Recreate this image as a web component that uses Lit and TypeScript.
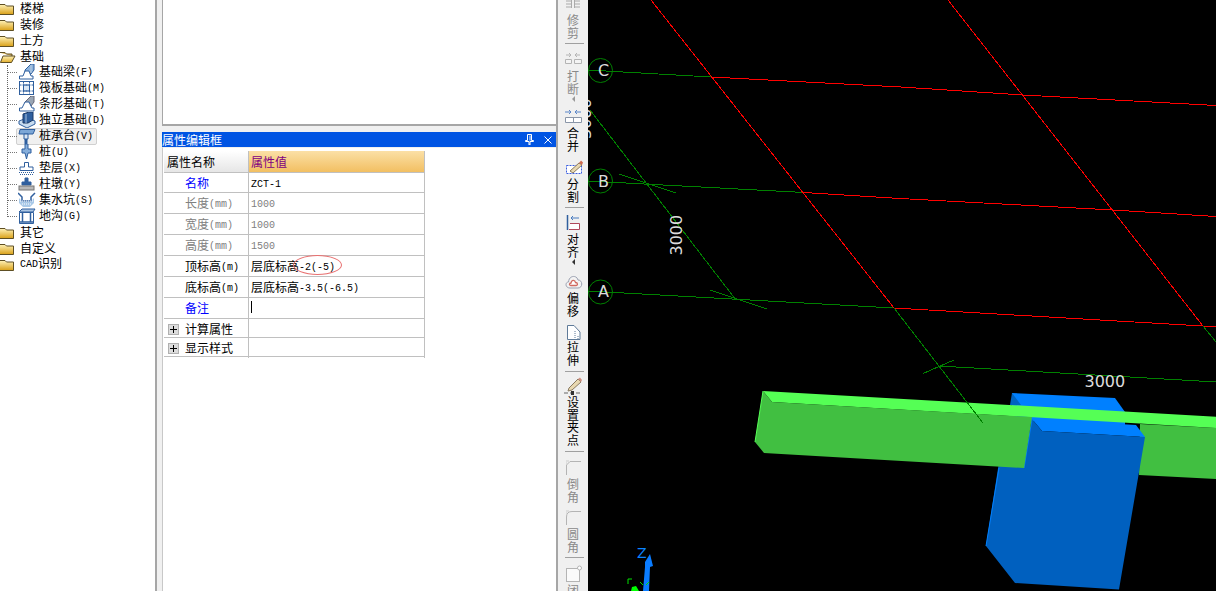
import { LitElement, css, html } from "lit";
import { customElement } from "lit/decorators.js";

// latin runs use a 6px wide mono, like the bitmap SimSun of the original
const mix = (text: string) =>
  text.split(/([\x00-\x7f]+)/).map((part, i) => (i % 2 ? html`<span class="lat">${part}</span>` : part));

const folderClosed = html`<svg width="14" height="13" viewBox="0 0 14 13">
  <defs><linearGradient id="fc" x1="0" y1="0" x2="0" y2="1"><stop offset="0" stop-color="#fff2b8"/><stop offset="1" stop-color="#d9a017"/></linearGradient></defs>
  <path d="M-1 2.5H5L6.5 4H13.5V12.5H-1Z" fill="url(#fc)" stroke="#5e4f24"/>
</svg>`;

const folderOpen = html`<svg width="16" height="13" viewBox="0 0 16 13">
  <defs><linearGradient id="fo" x1="0" y1="0" x2="0" y2="1"><stop offset="0" stop-color="#fff2b8"/><stop offset="1" stop-color="#e2ad2a"/></linearGradient></defs>
  <path d="M-1 2.5H5L6.5 4H12V6" fill="#d9b45a" stroke="#5e4f24"/>
  <path d="M3 6H15L11.5 12.5H0.5Z" fill="url(#fo)" stroke="#5e4f24"/>
</svg>`;

const B = "#2f5f9e";

const treeIcons: Record<string, unknown> = {
  beam: html`<svg class="ti" width="18" height="16" viewBox="0 0 18 16"><path d="M7 6L13 0H16V6L13 10H7Z" fill="#8fb4dc" stroke="${B}"/><path d="M1.5 15V12H5L7 7H11L13 12H15V15Z" fill="#fff" stroke="${B}"/><path d="M13 1V9" stroke="#bcd" /></svg>`,
  raft: html`<svg class="ti" width="18" height="16" viewBox="0 0 18 16"><rect x="1.5" y="1.5" width="14" height="13" fill="#fff" stroke="${B}"/><rect x="5.5" y="5" width="6" height="6" fill="#dbe8f5" stroke="${B}"/><path d="M1.5 5H15.5M1.5 11H15.5M5.5 1.5V14.5M11.5 1.5V14.5" stroke="${B}" stroke-dasharray="2 1"/></svg>`,
  strip: html`<svg class="ti" width="18" height="16" viewBox="0 0 18 16"><path d="M7 6L13 0H16V6L13 10H7Z" fill="#9aa6b4" stroke="#667"/><path d="M1.5 15V12H4L7 6H11L14 12H16V15Z" fill="#fff" stroke="${B}"/></svg>`,
  single: html`<svg class="ti" width="18" height="16" viewBox="0 0 18 16"><path d="M1 9L9 6L17 9V12L9 16L1 12Z" fill="#c8dcef" stroke="${B}"/><path d="M5 2L11 0H15V8L10 11H5Z" fill="${B}" stroke="#1c3a66"/><path d="M8 2V11" stroke="#a9c4e2"/></svg>`,
  cap: html`<svg class="ti" width="18" height="16" viewBox="0 0 18 16"><path d="M2 1.5H17L15 6H1Z" fill="#7da7d6" stroke="${B}"/><path d="M6 6H10V11H6Z" fill="#dce8f4" stroke="${B}"/><path d="M8 11V16" stroke="${B}" stroke-width="3"/></svg>`,
  pile: html`<svg class="ti" width="18" height="16" viewBox="0 0 18 16"><path d="M7 0H10V5H13V9H10L8.5 15L7 9H4V5H7Z" fill="#86aedb" stroke="${B}"/></svg>`,
  cushion: html`<svg class="ti" width="18" height="16" viewBox="0 0 18 16"><path d="M6.5 2.5H10.5V7H15V10.5H2V7H6.5Z" fill="#fff" stroke="${B}"/><path d="M1 12.5H16M2 14.5H15" stroke="${B}" stroke-dasharray="1 1"/></svg>`,
  pier: html`<svg class="ti" width="18" height="16" viewBox="0 0 18 16"><path d="M7 2H10V6H13V9H4V6H7Z" fill="${B}" stroke="${B}"/><rect x="1" y="10" width="15" height="4" fill="#b8b8b8" stroke="#777"/></svg>`,
  sump: html`<svg class="ti" width="18" height="16" viewBox="0 0 18 16"><path d="M0 1L4 5V9H13V5L17 1" fill="none" stroke="${B}" stroke-width="1.5"/><path d="M1 6L4 9.5H13L16 6V11L12 15H5L1 11Z" fill="#a9c9e8"/><path d="M2 9H15M4 12H13" stroke="#fff" stroke-dasharray="1 1"/></svg>`,
  ditch: html`<svg class="ti" width="18" height="16" viewBox="0 0 18 16"><path d="M1 4L4 1H17L15 4Z" fill="#a9c4e2" stroke="${B}"/><path d="M1.5 4.5H15.5V15.5H1.5Z" fill="none" stroke="${B}"/><path d="M4.5 5V14.5M12.5 5V14.5M1.5 14H15.5" stroke="${B}" stroke-width="1.5"/></svg>`,
};

interface TreeRow {
  label: string;
  icon?: string;
  open?: boolean;
}

const TREE: TreeRow[] = [
  { label: "楼梯" },
  { label: "装修" },
  { label: "土方" },
  { label: "基础", open: true },
  { label: "基础梁(F)", icon: "beam" },
  { label: "筏板基础(M)", icon: "raft" },
  { label: "条形基础(T)", icon: "strip" },
  { label: "独立基础(D)", icon: "single" },
  { label: "桩承台(V)", icon: "cap" },
  { label: "桩(U)", icon: "pile" },
  { label: "垫层(X)", icon: "cushion" },
  { label: "柱墩(Y)", icon: "pier" },
  { label: "集水坑(S)", icon: "sump" },
  { label: "地沟(G)", icon: "ditch" },
  { label: "其它" },
  { label: "自定义" },
  { label: "CAD识别" },
];

interface PropRow {
  name: string;
  value?: string;
  tone?: string;
  plus?: boolean;
  cursor?: boolean;
  ring?: boolean;
  size?: string;
}

const PROPS: PropRow[] = [
  { name: "名称", value: "ZCT-1", tone: "link", size: "h20" },
  { name: "长度(mm)", value: "1000", tone: "muted" },
  { name: "宽度(mm)", value: "1000", tone: "muted" },
  { name: "高度(mm)", value: "1500", tone: "muted" },
  { name: "顶标高(m)", value: "层底标高-2(-5)", ring: true },
  { name: "底标高(m)", value: "层底标高-3.5(-6.5)" },
  { name: "备注", tone: "link", cursor: true },
  { name: "计算属性", plus: true, size: "h19" },
  { name: "显示样式", plus: true, size: "h19" },
];

const GR = "#b4b4b4";

interface Tool {
  chars: string;
  top: number;
  icon: unknown;
  off?: boolean;
  arrow?: boolean;
  sep?: number;
}

const TOOLS: Tool[] = [
  {
    chars: "修剪", top: -5, off: true, sep: 4,
    icon: html`<svg class="tbi" width="24" height="18" viewBox="0 0 24 18"><path d="M5 6H10M5 9H10M5 12H10M14 6H19M14 9H19M14 12H19M10.500 5V13M13.500 5V13" stroke="#aaa" fill="none"/></svg>`,
  },
  {
    chars: "打断", top: 7, off: true, arrow: true,
    icon: html`<svg class="tbi" width="24" height="18" viewBox="0 0 24 18"><path d="M5 4H10M8 2L10 4L8 6M19 4H14M16 2L14 4L16 6" stroke="${GR}" fill="none"/><path d="M4.500 8.500H10.500V12.500H4.500ZM13.500 8.500H20.500V12.500H13.500Z" stroke="${GR}" fill="#f4f4f4"/></svg>`,
  },
  {
    chars: "合并", top: 6,
    icon: html`<svg class="tbi" width="24" height="18" viewBox="0 0 24 18"><path d="M4 4H10M8 2L10 4L8 6M20 4H14M16 2L14 4L16 6" stroke="#5b86c8" fill="none"/><path d="M4.500 9.500H20.500V14.500H4.500ZM12.500 9.500V14.500" stroke="#8a96a8" fill="#fff"/></svg>`,
  },
  {
    chars: "分割", top: 7, sep: 4,
    icon: html`<svg class="tbi" width="24" height="18" viewBox="0 0 24 18"><rect x="5.500" y="6.500" width="15" height="8" fill="#fff" stroke="#3a5ee0" stroke-dasharray="2 1"/><path d="M9 12L18 4L21 6L12 14Z" fill="#e8d8b0" stroke="#8a7a60"/><path d="M18 4L20 1.500L22 3.500L21 6Z" fill="#d06a50"/></svg>`,
  },
  {
    chars: "对齐", top: 6, arrow: true,
    icon: html`<svg class="tbi" width="24" height="18" viewBox="0 0 24 18"><path d="M6.500 1V16" stroke="#2f5f9e" stroke-width="1.500" fill="none"/><path d="M10 4H18M12 2L10 4L12 6" stroke="#4a7cc0" fill="none"/><path d="M9 9.500H18.500V15.500H8" fill="#fff" stroke="#b0485a"/></svg>`,
  },
  {
    chars: "偏移", top: 8,
    icon: html`<svg class="tbi" width="24" height="18" viewBox="0 0 24 18"><path d="M9 15C4 15 4 9 7.500 9C8 2 16 2 17 7C22 7 22 15 17 15Z" fill="#f3f3f3" stroke="#9aa0b0"/><path d="M10 12.500C8 12.500 8 10 10 10C10.500 6.500 14 6.500 14.500 9.500C17 9.500 17 12.500 15 12.500Z" fill="#fff" stroke="#d06a60" stroke-width="1.300"/></svg>`,
  },
  {
    chars: "拉伸", top: 5, sep: 5,
    icon: html`<svg class="tbi" width="24" height="18" viewBox="0 0 24 18"><path d="M6.500 3.500H13L19 10V17.500H6.500Z" fill="#fff" stroke="#5f7a98"/><path d="M14 9V17M17 14V17" stroke="#5f7a98" stroke-dasharray="1 1"/></svg>`,
  },
  {
    chars: "设置夹点", top: 5, sep: 5,
    icon: html`<svg class="tbi" width="24" height="18" viewBox="0 0 24 18"><path d="M8 11L17 2L20 5L11 13L7 14Z" fill="#e8d8b0" stroke="#8a7a60"/><path d="M17 2L19 0.500L21 3L20 5Z" fill="#d09080"/><path d="M3 16H21" stroke="#666" stroke-dasharray="4 2"/><rect x="10" y="14" width="3" height="4" fill="#333"/></svg>`,
  },
  {
    chars: "倒角", top: 7, off: true,
    icon: html`<svg class="tbi" width="24" height="18" viewBox="0 0 24 18"><path d="M5.500 16V6L9 2.500H20" stroke="${GR}" fill="none"/><path d="M5 2H8M5 4H6" stroke="#ccc"/></svg>`,
  },
  {
    chars: "圆角", top: 6, off: true, sep: 4,
    icon: html`<svg class="tbi" width="24" height="18" viewBox="0 0 24 18"><path d="M5.500 16V8Q5.500 2.500 11 2.500H20" stroke="${GR}" fill="none"/><path d="M5 2H8M5 4H6" stroke="#ccc"/></svg>`,
  },
  {
    chars: "闭", top: 7, off: true,
    icon: html`<svg class="tbi" width="24" height="18" viewBox="0 0 24 18"><rect x="5.500" y="3.500" width="13" height="13" fill="#fafafa" stroke="${GR}"/><circle cx="18.500" cy="3" r="2" fill="#fff" stroke="${GR}"/></svg>`,
  },
];

@customElement("app-root")
export class AppRoot extends LitElement {
  static styles = css`
    :host {
      display: block;
      width: 1216px;
      height: 591px;
      overflow: hidden;
      font-family: "Noto Sans CJK SC", "Liberation Sans", sans-serif;
      font-size: 12px;
      color: #000;
      background: #fff;
    }

    .app {
      display: flex;
      height: 591px;
    }

    .lat {
      font-family: "Liberation Mono", monospace;
      font-size: 10px;
      vertical-align: 1px;
    }

    .tree {
      position: relative;
      width: 155px;
      flex: none;
      border-right: 2px solid #a6a6a6;
      overflow: hidden;
    }

    .tree-row {
      display: flex;
      align-items: center;
      height: 16px;
      line-height: 16px;
      white-space: nowrap;
    }

    .tree-row .name {
      margin-left: 6px;
    }

    .tree-row.open .name {
      margin-left: 4px;
    }

    .tree-row.child {
      margin-left: 8px;
      padding-left: 10px;
      background: repeating-linear-gradient(90deg, #777 0 1px, transparent 1px 2px) 0 8px / 10px 1px no-repeat;
    }

    .tree-row.child .name {
      margin-left: 3px;
    }

    .highlight {
      position: absolute;
      left: 16px;
      top: 128px;
      width: 79px;
      height: 15px;
      background: #f0f0f0;
      border: 1px solid #d0d0d0;
      border-radius: 2px;
    }

    .tree-list {
      position: relative;
    }

    .dots {
      position: absolute;
      left: 7px;
      top: 65px;
      height: 152px;
      border-left: 1px dotted #666;
    }

    .middle {
      width: 401px;
      flex: none;
      display: flex;
      flex-direction: column;
      background: #f0f0f0;
      padding-left: 5px;
      border-right: 2px solid #a6a6a6;
      box-sizing: border-box;
    }

    .blank {
      height: 124px;
      flex: none;
      background: #fff;
      border-left: 1px solid #a6a6a6;
      border-bottom: 2px solid #a6a6a6;
    }

    .title {
      margin-top: 6px;
      height: 15px;
      flex: none;
      background: #0054e3;
      color: #fff;
      display: flex;
      align-items: center;
      justify-content: space-between;
      line-height: 15px;
    }

    .title-btns {
      display: flex;
      align-items: center;
      gap: 10px;
      padding-right: 4px;
    }

    .body {
      flex: 1;
      background: #fff;
      border-top: 1px solid #f0f0f0;
      border-left: 1px solid #c8c8c8;
      padding: 3px 0 0 1px;
    }

    .grid {
      width: 261px;
    }

    .row {
      display: grid;
      grid-template-columns: 85px 1fr;
      height: 21px;
      box-sizing: border-box;
      border-bottom: 1px solid #c0c0c0;
      line-height: 19px;
      white-space: nowrap;
    }

    .row.head {
      height: 22px;
      line-height: 21px;
    }

    .row.h20 {
      height: 20px;
    }

    .row.h19 {
      height: 19px;
      line-height: 20px;
    }

    .row > div {
      border-right: 1px solid #c0c0c0;
    }

    .row > div:first-child {
      padding-left: 21px;
    }

    .row > .val {
      position: relative;
      padding-left: 2px;
    }

    .row.head > .key {
      padding-left: 3px;
      background: linear-gradient(#ffffff, #e6e6e6);
    }

    .row.head > .val {
      background: linear-gradient(#fbe0a6, #f2bf62);
      color: #800080;
    }

    .link {
      color: #0000ff;
    }

    .muted {
      color: #808080;
    }

    .row > div.plus-cell:first-child {
      display: flex;
      align-items: center;
      gap: 6px;
      padding-left: 4px;
    }

    .plus {
      width: 11px;
      height: 11px;
      box-sizing: border-box;
      background: #dcdcdc;
      border: 1px solid #b0b0b0;
      position: relative;
      flex: none;
    }

    .plus::before {
      content: "";
      position: absolute;
      left: 1px;
      right: 1px;
      top: 4px;
      height: 1px;
      background: #000;
    }

    .plus::after {
      content: "";
      position: absolute;
      top: 1px;
      bottom: 1px;
      left: 4px;
      width: 1px;
      background: #000;
    }

    .ring {
      position: absolute;
      left: 44px;
      top: -1px;
      width: 49px;
      height: 20px;
      box-sizing: border-box;
      border: 1px solid #e87070;
      border-radius: 50%;
    }

    .caret {
      position: absolute;
      left: 2px;
      top: 3px;
      width: 1px;
      height: 12px;
      background: #000;
    }

    .toolbar {
      width: 30px;
      flex: none;
      background: #f0f0f0;
      overflow: hidden;
      display: flex;
      flex-direction: column;
      align-items: center;
      height: 591px;
    }

    .tool {
      display: flex;
      flex-direction: column;
      align-items: center;
      flex: none;
    }

    .tbi {
      display: block;
      height: 18px;
      overflow: visible;
      margin-bottom: 1px;
    }

    .chars {
      width: 12px;
      line-height: 12.5px;
      text-align: center;
      word-break: break-all;
    }

    .tool.off .chars {
      color: #8a8a8a;
    }

    .arrow {
      height: 7px;
      width: 6px;
      display: flex;
      align-items: center;
      justify-content: center;
    }

    .arrow::before {
      content: "";
      border-style: solid;
      border-width: 3px 3px 3px 0;
      border-color: transparent #333 transparent transparent;
    }

    .tool.off .arrow::before {
      border-right-color: #999;
    }

    .sep {
      width: 19px;
      height: 1px;
      background: #a0a0a0;
      flex: none;
      margin-left: 3px;
    }

    .ti {
      display: block;
      flex: none;
      position: relative;
    }

    .scene {
      flex: 1;
      display: block;
      background: #000;
      height: 591px;
    }

    .scene text {
      font-family: "DejaVu Sans", sans-serif;
      font-size: 16px;
      fill: #dcdcdc;
    }

    .scene .axis-z {
      font-size: 14px;
      fill: #0a84ff;
    }

    .crisp line,
    .crisp polyline {
      shape-rendering: crispEdges;
      fill: none;
      stroke-width: 1;
    }
  `;

  private renderTree() {
    return html`<div class="tree">
      <div class="highlight"></div>
      <div class="dots"></div>
      <div class="tree-list">
        ${TREE.map((row) => {
          if (row.icon) {
            return html`<div class="tree-row child">
              ${treeIcons[row.icon]}
              <span class="name">${mix(row.label)}</span>
            </div>`;
          }
          return html`<div class="tree-row ${row.open ? "open" : ""}">
            ${row.open ? folderOpen : folderClosed}
            <span class="name">${mix(row.label)}</span>
          </div>`;
        })}
      </div>
    </div>`;
  }

  private renderProps() {
    return html`<div class="grid">
      <div class="row head">
        <div class="key">属性名称</div>
        <div class="val">属性值</div>
      </div>
      ${PROPS.map(
        (row) => html`<div class="row ${row.size ?? ""}">
          ${row.plus
            ? html`<div class="plus-cell"><span class="plus"></span><span>${row.name}</span></div>`
            : html`<div class=${row.tone ?? ""}>${mix(row.name)}</div>`}
          <div class="val ${row.tone === "muted" ? "muted" : ""}">
            ${row.value ? mix(row.value) : ""}
            ${row.ring ? html`<span class="ring"></span>` : ""}
            ${row.cursor ? html`<span class="caret"></span>` : ""}
          </div>
        </div>`,
      )}
    </div>`;
  }

  private renderToolbar() {
    return html`<div class="toolbar">
      ${TOOLS.map(
        (tool) => html`<div class="tool ${tool.off ? "off" : ""}" style="margin-top:${tool.top}px">
            ${tool.icon}
            <div class="chars">${tool.chars}</div>
            ${tool.arrow ? html`<div class="arrow"></div>` : ""}
          </div>
          ${tool.sep ? html`<div class="sep" style="margin-top:${tool.sep}px"></div>` : ""}`,
      )}
    </div>`;
  }

  private renderScene() {
    return html`<svg class="scene" viewBox="588 0 628 591" width="628" height="591">
      <g class="crisp">
        <polyline points="588,70 711,77" stroke="#008000" />
        <polyline points="711,77 901,87 1023,95 1216,105.500" stroke="#ff0000" />
        <polyline points="588,181 804,192.500" stroke="#008000" />
        <polyline points="804,192.500 900,198.500 1113,210 1216,216.500" stroke="#ff0000" />
        <polyline points="588,291 894,308" stroke="#008000" />
        <polyline points="894,308 1203,326 1216,326.500" stroke="#ff0000" />
        <line x1="651" y1="0" x2="894" y2="308" stroke="#ff0000" />
        <line x1="948" y1="0" x2="1203" y2="326" stroke="#ff0000" />
        <line x1="1203" y1="326" x2="1216" y2="342" stroke="#008000" />
        <line x1="590" y1="110" x2="736" y2="300" stroke="#008000" />
        <line x1="619" y1="174" x2="676" y2="193" stroke="#008000" />
        <line x1="710" y1="290" x2="767" y2="309" stroke="#008000" />
        <line x1="923" y1="373.500" x2="954" y2="360" stroke="#008000" />
        <polyline points="939,366 1216,382" stroke="#008000" />
      </g>
      <circle cx="600.500" cy="70.500" r="12" fill="none" stroke="#008000" />
      <circle cx="600.500" cy="181" r="12" fill="none" stroke="#008000" />
      <circle cx="600.500" cy="292" r="12" fill="none" stroke="#008000" />
      <text x="598" y="76">C</text>
      <text x="598" y="187">B</text>
      <text x="598" y="297">A</text>
      <text transform="translate(682,255.500) rotate(-90)">3000</text>
      <text transform="translate(591,139) rotate(-90)">3000</text>
      <text x="1084.500" y="387">3000</text>

      <polygon points="1012,393 1115,398 1125,412 1125,425 1012,420" fill="#0080ff" />
      <polygon points="1012,393 1010,405 1021,405" fill="#0064c0" />
      <polygon points="1140,424 1216,428 1216,479 1139,475" fill="#41bf41" />
      <polygon points="1032,419 1136,425 1145,437 1042,431" fill="#0080ff" />
      <polygon points="1042,431 1145,437 1119,589.500 1015,583 986,546 999,462 1024,462 1032,419" fill="#0060bf" />
      <polyline points="1032,419 1024,468" stroke="#0080ff" fill="none" />
      <polyline points="999,468 986,546" stroke="#0080ff" fill="none" />
      <polygon points="763,391 1216,416.700 1216,428 772,402" fill="#55ff55" />
      <polygon points="772,402 1032,417 1024,468 764,453 755,442 763,391" fill="#41bf41" />
      <polyline points="763,391 755,442" stroke="#55ff55" fill="none" />
      <g class="crisp">
        <line x1="894" y1="308" x2="983" y2="423" stroke="#008000" />
      </g>

      <text class="axis-z" x="637" y="558">Z</text>
      <polygon points="650,554 653,566 650,567 649,591 643,591 645,567 645,562" fill="#0a7cff" />
      <path d="M628 584V579H632M640 582L643 585M649 582L646 585" stroke="#00e000" fill="none" />
      <polygon points="632,587 636,586 639,591 631,591" fill="#00ff00" />
    </svg>`;
  }

  render() {
    return html`<div class="app">
      ${this.renderTree()}
      <div class="middle">
        <div class="blank"></div>
        <div class="title">
          <span>属性编辑框</span>
          <span class="title-btns">
            <svg width="9" height="11" viewBox="0 0 9 11">
              <path d="M2.500 0.500H6.500V6.500H8.500V7.500H5V11H4V7.500H0.500V6.500H2.500ZM5 1.500V6.500" fill="none" stroke="#fff" />
            </svg>
            <svg width="8" height="8" viewBox="0 0 8 8"><path d="M0.500 0.500L7.500 7.500M7.500 0.500L0.500 7.500" stroke="#fff" /></svg>
          </span>
        </div>
        <div class="body">${this.renderProps()}</div>
      </div>
      ${this.renderToolbar()}
      ${this.renderScene()}
    </div>`;
  }
}
